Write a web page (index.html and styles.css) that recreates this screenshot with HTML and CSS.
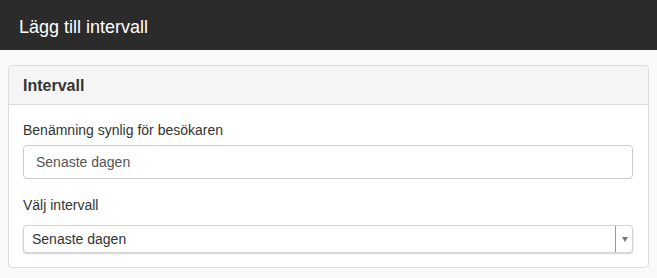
FILE: index.html
```html
<!DOCTYPE html>
<html lang="sv">
<head>
<meta charset="utf-8">
<title>Lägg till intervall</title>
<link rel="stylesheet" href="styles.css">
</head>
<body>
<header class="topbar">
  <h1 class="topbar-title">Lägg till intervall</h1>
</header>
<main class="content">
  <section class="panel">
    <div class="panel-heading">
      <h3 class="panel-title">Intervall</h3>
    </div>
    <div class="panel-body">
      <div class="form-group">
        <label class="form-label">Benämning synlig för besökaren</label>
        <div class="text-input">Senaste dagen</div>
      </div>
      <div class="form-group">
        <label class="form-label">Välj intervall</label>
        <div class="select-box">
          <span class="select-value">Senaste dagen</span>
          <span class="select-arrow"><span class="triangle"></span></span>
        </div>
      </div>
    </div>
  </section>
</main>
</body>
</html>
```

FILE: styles.css
```css
* { box-sizing: border-box; }
html, body { margin: 0; padding: 0; }
body {
  background: #f9f9f9;
  font-family: "Liberation Sans", Arial, Helvetica, sans-serif;
  color: #333;
  width: 657px;
  height: 278px;
  overflow: hidden;
}
.topbar {
  background: #2b2b2b;
  height: 50px;
  padding: 17px 19px 12px;
}
.topbar-title {
  margin: 0;
  font-size: 18px;
  line-height: 21px;
  font-weight: normal;
  color: #fff;
}
.content {
  padding: 15px 8px 0;
}
.panel {
  background: #fff;
  border: 1px solid #dcdcdc;
  border-radius: 4px;
}
.panel-heading {
  background: #f5f5f5;
  border-bottom: 1px solid #dcdcdc;
  border-radius: 3px 3px 0 0;
  padding: 11px 14px 9px;
  height: 39px;
}
.panel-title {
  margin: 0;
  font-size: 16px;
  line-height: 18px;
  font-weight: bold;
  color: #333;
}
.panel-body {
  padding: 15px 15px 14px 14px;
  display: flex;
  flex-direction: column;
  gap: 16px;
}
.form-group {
  display: flex;
  flex-direction: column;
}
.form-label {
  font-size: 14px;
  line-height: 20px;
  color: #333;
  margin-bottom: 5px;
}
.text-input {
  height: 34px;
  border: 1px solid #ccc;
  border-radius: 4px;
  padding: 6px 12px;
  font-size: 14px;
  line-height: 20px;
  color: #555;
  background: #fff;
}
.select-box {
  margin-top: 5px;
  height: 28px;
  border: 1px solid #d2d2d2;
  border-radius: 4px;
  background: #fff;
  box-shadow: 0 1px 2px rgba(0,0,0,0.18);
  display: flex;
  align-items: stretch;
}
.select-value {
  flex: 1;
  padding: 3px 8px;
  font-size: 14px;
  line-height: 20px;
  color: #333;
}
.select-arrow {
  width: 17px;
  border-left: 1px solid #9a9a9a;
  display: flex;
  align-items: center;
  justify-content: center;
}
.triangle {
  width: 0;
  height: 0;
  border-left: 3px solid transparent;
  border-right: 3px solid transparent;
  border-top: 5px solid #777;
  margin-left: 1px;
}
```
